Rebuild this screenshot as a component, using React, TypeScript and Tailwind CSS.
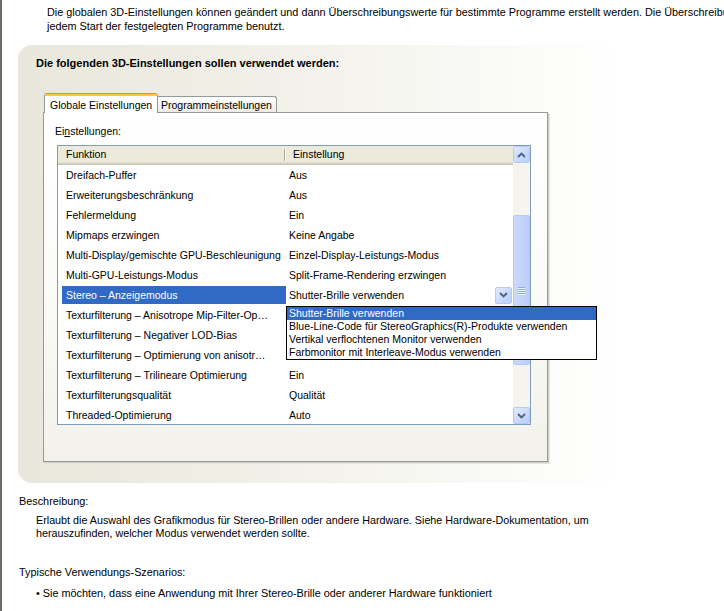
import React from "react";

const rows: [string, string][] = [
  ["Dreifach-Puffer", "Aus"],
  ["Erweiterungsbeschränkung", "Aus"],
  ["Fehlermeldung", "Ein"],
  ["Mipmaps erzwingen", "Keine Angabe"],
  ["Multi-Display/gemischte GPU-Beschleunigung", "Einzel-Display-Leistungs-Modus"],
  ["Multi-GPU-Leistungs-Modus", "Split-Frame-Rendering erzwingen"],
  ["Stereo – Anzeigemodus", "__combo__"],
  ["Texturfilterung – Anisotrope Mip-Filter-Op…", ""],
  ["Texturfilterung – Negativer LOD-Bias", ""],
  ["Texturfilterung – Optimierung von anisotr…", ""],
  ["Texturfilterung – Trilineare Optimierung", "Ein"],
  ["Texturfilterungsqualität", "Qualität"],
  ["Threaded-Optimierung", "Auto"],
];

const options = [
  "Shutter-Brille verwenden",
  "Blue-Line-Code für StereoGraphics(R)-Produkte verwenden",
  "Vertikal verflochtenen Monitor verwenden",
  "Farbmonitor mit Interleave-Modus verwenden",
];

function Chevron({ up }: { up?: boolean }) {
  return (
    <svg width="9" height="6" viewBox="0 0 9 6">
      <path
        d={up ? "M1 5 L4.5 1.5 L8 5" : "M1 1 L4.5 4.5 L8 1"}
        stroke="#4d6185"
        strokeWidth="1.8"
        fill="none"
      />
    </svg>
  );
}

function XpButton({ up, className }: { up?: boolean; className?: string }) {
  return (
    <div
      className={
        "flex items-center justify-center rounded-[2px] border border-[#b7caf5] bg-gradient-to-br from-[#e1eafe] to-[#b9cdf9] " +
        (className ?? "")
      }
    >
      <Chevron up={up} />
    </div>
  );
}

export default function App() {
  return (
    <div
      className="flex w-[724px] h-[611px] overflow-hidden bg-white text-black"
      style={{ fontFamily: '"Liberation Sans", Arial, sans-serif' }}
    >
      <div className="w-[2px] shrink-0 bg-[#6f6e62]" />
      <div className="flex-1 min-w-0 flex flex-col">
        {/* top text */}
        <div className="pt-[5px] pl-[45px] text-[10.85px] leading-[14px] whitespace-nowrap overflow-hidden">
          <div>
            Die globalen 3D-Einstellungen können geändert und dann Überschreibungswerte für bestimmte Programme erstellt werden. Die Überschreibungswerte werden bei
          </div>
          <div>jedem Start der festgelegten Programme benutzt.</div>
        </div>

        {/* panel */}
        <div className="ml-[16px] mt-[12px] w-[600px] h-[438px] shrink-0 rounded-[14px] bg-gradient-to-r from-[#e9e7db] via-[#f3f2eb] to-white pt-[11px]">
          <div className="pl-[18px] text-[11px] leading-[14px] font-bold">
            Die folgenden 3D-Einstellungen sollen verwendet werden:
          </div>

          <div className="ml-[25px] mt-[22px] w-[505px] text-[10.5px]">
            {/* tabs */}
            <div className="flex items-end h-[20px] pl-[1px] relative z-10">
              <div className="w-[114px] h-[20px] -mb-[1px] flex flex-col bg-white border-x border-[#919b9c] rounded-t-[3px] overflow-hidden">
                <div className="h-[1px] bg-[#e68b2c] shrink-0" />
                <div className="h-[2px] bg-[#ffc73c] shrink-0" />
                <div className="flex-1 flex items-center pl-[5px] leading-[14px]">
                  Globale Einstellungen
                </div>
              </div>
              <div className="w-[119px] h-[16px] flex items-center pl-[3px] border-t border-r border-[#919b9c] rounded-tr-[3px] bg-gradient-to-b from-white to-[#ecebe5] leading-[14px]">
                Programmeinstellungen
              </div>
            </div>

            {/* tab page */}
            <div className="h-[350px] border border-[#919b9c] bg-gradient-to-b from-white via-[#fbfbf8] to-[#f2f1ea] shadow-[1px_1px_0_#d2d1c8,2px_2px_0_#e6e5dd] pt-[11px]">
              <div className="pl-[11px] leading-[14px]">
                Ei<span className="underline">n</span>stellungen:
              </div>

              {/* list view */}
              <div className="ml-[13px] mt-[7px] w-[474px] h-[280px] border border-[#7f9db9] bg-white flex relative">
                <div className="w-[455px] flex flex-col overflow-hidden">
                  {/* header */}
                  <div className="h-[19px] shrink-0 flex bg-[#ebeadb] shadow-[inset_0_-1px_0_#cbc7b8,inset_0_-2px_0_#d6d2c2,inset_0_-3px_0_#e2decd]">
                    <div className="w-[228px] flex items-center pl-[8px] pb-[3px] leading-[14px] relative">
                      Funktion
                      <div className="absolute right-0 top-[3px] h-[12px] w-[2px] border-l border-[#aca899] bg-white" />
                    </div>
                    <div className="w-[227px] flex items-center pl-[7px] pb-[3px] leading-[14px]">
                      Einstellung
                    </div>
                  </div>
                  {/* rows */}
                  {rows.map(([f, v], i) => {
                    const sel = v === "__combo__";
                    return (
                      <div key={i} className="h-[20px] shrink-0 flex">
                        <div className="w-[228px] pl-[4px] flex items-center">
                          <div
                            className={
                              "w-full h-[18px] flex items-center pl-[4px] leading-[14px] whitespace-nowrap overflow-hidden " +
                              (sel ? "bg-[#316ac5] text-white" : "")
                            }
                          >
                            {f}
                          </div>
                        </div>
                        {sel ? (
                          <div className="w-[227px] flex items-center justify-between pl-[3px] pr-[1px] bg-white">
                            <span className="leading-[14px]">Shutter-Brille verwenden</span>
                            <XpButton className="w-[17px] h-[17px]" />
                          </div>
                        ) : (
                          <div className="w-[227px] flex items-center pl-[3px] leading-[14px] whitespace-nowrap">
                            {v}
                          </div>
                        )}
                      </div>
                    );
                  })}
                </div>

                {/* scrollbar */}
                <div className="w-[17px] flex flex-col bg-[#f5f4ef]">
                  <XpButton up className="h-[17px] shrink-0" />
                  <div className="h-[52px] shrink-0" />
                  <div className="h-[150px] shrink-0 rounded-[2px] border border-[#b5c8f4] bg-gradient-to-r from-[#cbdafd] to-[#bccffa] flex flex-col items-center justify-center gap-[1px]">
                    {[0, 1, 2, 3].map((k) => (
                      <div key={k} className="w-[7px] h-[1px] bg-[#8fa9e6] shadow-[0_1px_0_#eef3ff]" />
                    ))}
                  </div>
                  <div className="flex-1" />
                  <XpButton className="h-[17px] shrink-0" />
                </div>

                {/* dropdown list */}
                <div className="absolute left-[228px] top-[160px] w-[311px] border border-black bg-white z-20">
                  {options.map((o, i) => (
                    <div
                      key={i}
                      className={
                        "h-[13px] flex items-center pl-[2px] leading-[13px] whitespace-nowrap " +
                        (i === 0 ? "bg-[#316ac5] text-white" : "")
                      }
                    >
                      {o}
                    </div>
                  ))}
                </div>
              </div>
            </div>
          </div>
        </div>

        {/* description */}
        <div className="mt-[11px] pl-[17px] text-[10.85px] leading-[14px]">Beschreibung:</div>
        <div className="mt-[6px] pl-[34px] text-[10.75px] leading-[13px]">
          <div>
            Erlaubt die Auswahl des Grafikmodus für Stereo-Brillen oder andere Hardware. Siehe Hardware-Dokumentation, um
          </div>
          <div>herauszufinden, welcher Modus verwendet werden sollte.</div>
        </div>
        <div className="mt-[25px] pl-[17px] text-[10.85px] leading-[14px]">Typische Verwendungs-Szenarios:</div>
        <div className="mt-[7px] pl-[34px] text-[10.85px] leading-[14px] whitespace-nowrap">
          • Sie möchten, dass eine Anwendung mit Ihrer Stereo-Brille oder anderer Hardware funktioniert
        </div>
      </div>
    </div>
  );
}
